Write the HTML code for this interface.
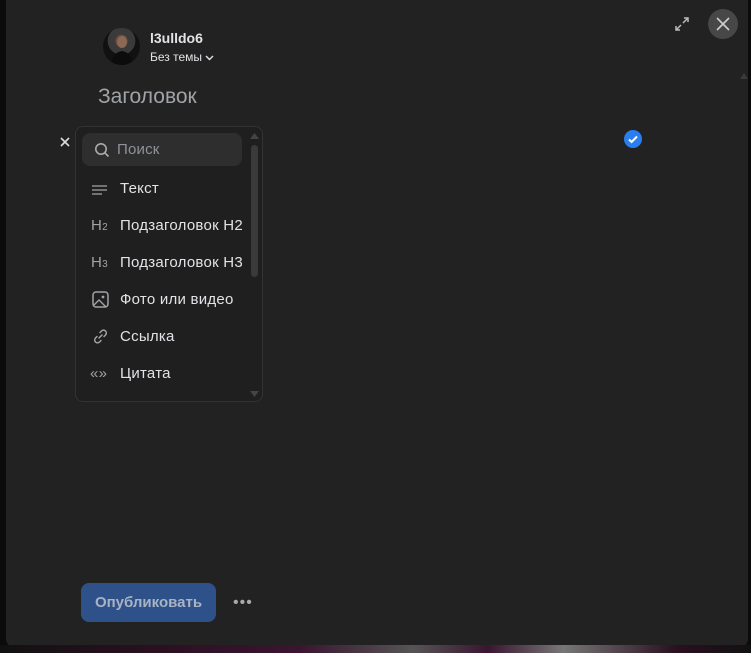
<!DOCTYPE html>
<html><head><meta charset="utf-8"><style>
*{box-sizing:border-box;margin:0;padding:0}
body{width:751px;height:653px;background:#0b0b0c;overflow:hidden;position:relative;font-family:"Liberation Sans",Arial,sans-serif;color:#e1e3e6}
.panel{position:absolute;left:6px;top:0;width:742px;height:647px;background:#222222;border-radius:0 0 8px 8px}
.glow{position:absolute;left:0;top:645px;width:751px;height:8px;background:linear-gradient(90deg,#111 0%,#2a1020 20%,#3a1530 40%,#555 55%,#3a1530 65%,#777 75%,#2a1020 90%,#111 100%)}
.av{position:absolute;left:103px;top:28px;width:37px;height:37px;border-radius:50%;background:radial-gradient(circle at 50% 35%,#6b4a3a 0 20%,#3a3a3a 21% 45%,#111 46%);overflow:hidden}
.name{position:absolute;left:150px;top:30px;font-size:14px;font-weight:bold;color:#e1e3e6}
.theme{position:absolute;left:150px;top:50px;font-size:12px;color:#e1e3e6}
.title{position:absolute;left:98px;top:85px;font-size:21px;color:#a0a3a7}
.menu{position:absolute;left:75px;top:126px;width:188px;height:276px;background:#1f1f1f;border:1px solid #333;border-radius:8px}
.search{position:absolute;left:6px;top:6px;width:160px;height:33px;background:#2e2e2e;border-radius:8px}
.search span{position:absolute;left:35px;top:8px;font-size:15px;color:#8f9399;letter-spacing:0.2px}
.item{position:absolute;left:0;height:37px;width:170px;font-size:15px;color:#e1e3e6;letter-spacing:0.25px}
.item .t{position:absolute;left:44px;top:10px;white-space:nowrap}
.item .i{position:absolute;left:16px;top:10px;color:#a0a3a7;font-size:15px}
.sb{position:absolute;left:175px;top:18px;width:7px;height:132px;background:#3a3a3a;border-radius:4px}
.close{position:absolute;left:708px;top:9px;width:30px;height:30px;border-radius:50%;background:#474747}
.btn{position:absolute;left:81px;top:583px;width:135px;height:39px;background:#2e5189;border-radius:8px;color:#a8b3c4;font-weight:bold;font-size:15px;text-align:center;line-height:40px}
.dots{position:absolute;left:233px;top:594px;color:#aaa;font-size:16px;letter-spacing:1px}
.chk{position:absolute;left:624px;top:130px;width:18px;height:18px;border-radius:50%;background:#2a7ff0}
</style></head><body>
<div class="panel"></div>
<div class="glow"></div>
<div class="av"><svg width="37" height="37"><ellipse cx="19" cy="14" rx="5" ry="6" fill="#8a6a55"/><path d="M8 37 Q10 24 19 23 Q28 24 30 37Z" fill="#0c0c0c"/></svg></div>
<div class="name">l3ulldo6</div>
<div class="theme">Без темы <svg width="9" height="6" viewBox="0 0 9 6"><path d="M1 1l3.5 3.5L8 1" stroke="#e1e3e6" stroke-width="1.4" fill="none"/></svg></div>
<div class="title">Заголовок</div>
<svg style="position:absolute;left:60px;top:137px" width="10" height="10"><path d="M1 1l8 8M9 1L1 9" stroke="#ddd" stroke-width="1.6"/></svg>
<div class="menu">
 <div class="search"><svg style="position:absolute;left:12px;top:9px" width="16" height="16"><circle cx="7" cy="7" r="5.2" stroke="#aaa" stroke-width="1.6" fill="none"/><path d="M11 11l3.5 3.5" stroke="#aaa" stroke-width="1.6"/></svg><span>Поиск</span></div>
 <div class="item" style="top:43px"><svg class="i" style="top:15px" width="16" height="10"><path d="M0 1h15M0 5h15M0 9h10" stroke="#a0a3a7" stroke-width="1.3"/></svg><span class="t">Текст</span></div>
 <div class="item" style="top:80px"><span class="i" style="left:15px">H<small style="font-size:10px">2</small></span><span class="t">Подзаголовок H2</span></div>
 <div class="item" style="top:117px"><span class="i" style="left:15px">H<small style="font-size:10px">3</small></span><span class="t">Подзаголовок H3</span></div>
 <div class="item" style="top:154px"><svg class="i" style="top:10px" width="17" height="17"><rect x="1" y="1" width="15" height="15" rx="3" stroke="#a0a3a7" stroke-width="1.5" fill="none"/><path d="M2 14l5-5 7 7" stroke="#a0a3a7" stroke-width="1.4" fill="none"/><circle cx="11" cy="6" r="1.4" fill="#a0a3a7"/></svg><span class="t">Фото или видео</span></div>
 <div class="item" style="top:191px"><svg class="i" style="top:10px" width="17" height="17"><path d="M7 10l3-3M8 4.5l1.5-1.5a2.8 2.8 0 014 4L12 8.5M9 12.5L7.5 14a2.8 2.8 0 01-4-4L5 8.5" stroke="#a0a3a7" stroke-width="1.5" fill="none" stroke-linecap="round"/></svg><span class="t">Ссылка</span></div>
 <div class="item" style="top:228px"><span class="i" style="left:14px">«»</span><span class="t">Цитата</span></div>
 <div class="sb"></div>
 <svg style="position:absolute;left:174px;top:6px" width="9" height="7"><path d="M0 6L4.5 0 9 6Z" fill="#444"/></svg>
 <svg style="position:absolute;left:174px;top:264px" width="9" height="7"><path d="M0 0L4.5 6 9 0Z" fill="#444"/></svg>
</div>
<div class="chk"><svg width="18" height="18"><path d="M5 9.5l2.6 2.5L13 6.5" stroke="#fff" stroke-width="2" fill="none"/></svg></div>
<svg style="position:absolute;left:674px;top:16px" width="16" height="16"><path d="M9 7l5-5M10 2h4v4M7 9l-5 5M2 10v4h4" stroke="#bbb" stroke-width="1.5" fill="none"/></svg>
<div class="close"><svg style="position:absolute;left:8px;top:8px" width="14" height="14"><path d="M1 1l12 12M13 1L1 13" stroke="#ccc" stroke-width="1.7"/></svg></div>
<svg style="position:absolute;left:740px;top:73px" width="8" height="6"><path d="M0 6L4 0 8 6Z" fill="#3a3a3a"/></svg>
<div class="btn">Опубликовать</div>
<div class="dots">•••</div>
</body></html>
